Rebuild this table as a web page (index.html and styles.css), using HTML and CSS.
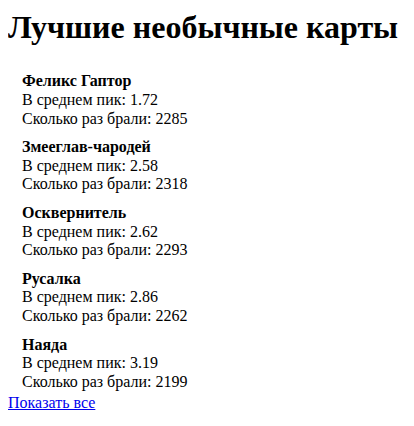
FILE: index.html
```html
<!DOCTYPE html>
<html lang="ru">
<head>
<meta charset="utf-8">
<title>Лучшие необычные карты</title>
<link rel="stylesheet" href="styles.css">
</head>
<body>
<h1 class="title">Лучшие необычные карты</h1>
<ul class="cards">
  <li class="card"><div class="name">Феликс Гаптор</div><div>В среднем пик: 1.72</div><div>Сколько раз брали: 2285</div></li>
  <li class="card"><div class="name">Змееглав-чародей</div><div>В среднем пик: 2.58</div><div>Сколько раз брали: 2318</div></li>
  <li class="card"><div class="name">Осквернитель</div><div>В среднем пик: 2.62</div><div>Сколько раз брали: 2293</div></li>
  <li class="card"><div class="name">Русалка</div><div>В среднем пик: 2.86</div><div>Сколько раз брали: 2262</div></li>
  <li class="card"><div class="name">Наяда</div><div>В среднем пик: 3.19</div><div>Сколько раз брали: 2199</div></li>
</ul>
<a class="more" href="#">Показать все</a>
</body>
</html>
```
FILE: styles.css
```css
body {
  margin: 8px;
  font-family: "Liberation Serif", "Times New Roman", serif;
  font-size: 16px;
  color: #000;
  background: #fff;
}
.title {
  font-size: 32px;
  font-weight: bold;
  line-height: 38px;
  margin: 0 0 21.44px;
}
.cards {
  list-style: none;
  margin: 0 0 -2px;
  padding: 0 0 0 14px;
  line-height: 18.6px;
}
.card {
  padding: 5px 0;
}
.name {
  font-weight: bold;
}
.more {
  display: inline-block;
  line-height: 18.4px;
  color: #0000ee;
  text-decoration: underline;
}
```
